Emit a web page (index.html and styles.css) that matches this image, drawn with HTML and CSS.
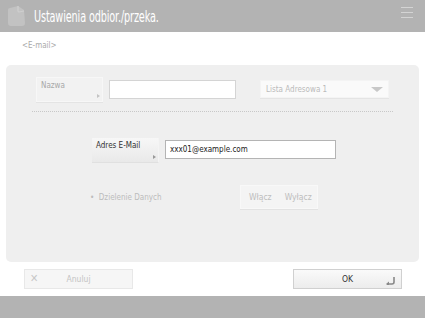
FILE: index.html
```html
<!DOCTYPE html>
<html lang="pl">
<head>
	<meta charset="UTF-8">
	<title>Ustawienia odbior./przeka.</title>
	<link rel="stylesheet" href="styles.css">
</head>
<body>
	<div class="header">
		<svg class="app-icon" width="22" height="22" viewBox="0 0 22 22">
			<path d="M3 5 Q3 3 5 3 L13 1 L19 5 L20 18 Q20 21 17 21 L6 21 Q3 21 3 18 Z" fill="#c2c2c2"/>
			<path d="M13 1 L13 6 Q13 7 14 7 L19 6" fill="none" stroke="#cfcfcf" stroke-width="1.2"/>
		</svg>
		<div class="title-wrap">
			<p class="page-name">Ustawienia odbior./przeka.</p>
		</div>
		<div class="menu-btn">
			<span></span><span></span><span></span>
		</div>
	</div>
	<div class="crumb">&lt;E-mail&gt;</div>
	<div class="panel">
		<div class="row top-row">
			<div class="key-btn disabled">Nazwa<i class="arrow"></i></div>
			<div class="text-box name-box"></div>
			<div class="select-box">Lista Adresowa 1<span class="caret"></span></div>
		</div>
		<div class="dots"></div>
		<div class="row email-row">
			<div class="key-btn">Adres E-Mail<i class="arrow"></i></div>
			<div class="text-box email-box">xxx01@example.com</div>
		</div>
		<div class="row share-row">
			<div class="share-label">&bull;&nbsp; Dzielenie Danych</div>
			<div class="toggle">
				<span>Włącz</span>
				<span>Wyłącz</span>
			</div>
		</div>
	</div>
	<div class="actions">
		<div class="act-btn cancel"><span class="x">&#x2715;</span><span class="cancel-text">Anuluj</span></div>
		<div class="act-btn ok">OK<svg class="enter" width="10" height="8" viewBox="0 0 10 8"><path d="M8 0 L8 5 Q8 7 6 7 L1 7" fill="none" stroke="#888" stroke-width="1.6"/><path d="M0 7 L3 4.5 L3 9.5 Z" fill="#888"/></svg></div>
	</div>
	<div class="footer"></div>
</body>
</html>
```

FILE: styles.css
```css
body {
	margin: 0;
	width: 425px;
	height: 318px;
	overflow: hidden;
	background: #fff;
	font-family: "DejaVu Sans", sans-serif;
	font-stretch: condensed;
	color: #333;
}

.header {
	height: 32px;
	background-color: #b3b3b3;
	display: flex;
	align-items: center;
	padding: 0 12px 0 5px;
}

.app-icon {
	margin-right: 7px;
}

.title-wrap {
	flex: 1;
}

.page-name {
	display: inline-block;
	margin: 0;
	color: #fff;
	font-size: 15px;
	letter-spacing: -0.2px;
	transform: scaleX(0.72);
	transform-origin: left center;
}

.menu-btn {
	display: flex;
	flex-direction: column;
	gap: 4px;
	margin-top: -8px;
}

.menu-btn span {
	display: block;
	width: 12px;
	height: 1px;
	background: #d4d4d4;
}

.crumb {
	margin: 9px 0 0 22px;
	height: 14px;
	font-size: 8px;
	color: #aaa;
}

.panel {
	margin: 10px 6px 0 6px;
	height: 197px;
	background-color: #efefef;
	border-radius: 5px;
	box-sizing: border-box;
	padding: 12px 30px 0 30px;
}

.row {
	display: flex;
	align-items: flex-start;
}

.key-btn {
	position: relative;
	box-sizing: border-box;
	width: 67px;
	height: 25px;
	padding: 3px 0 0 4px;
	font-size: 8px;
	color: #333;
	background: linear-gradient(#f7f7f7, #e9e9e9);
	border-bottom: 1px solid #e0e0e0;
	border-right: 1px solid #f4f4f4;
}

.key-btn.disabled {
	color: #a8a8a8;
	background: #f2f2f2;
	border: 1px solid #f7f7f7;
	box-shadow: 0 1px 0 #e4e4e4;
}

.arrow {
	position: absolute;
	right: 2px;
	bottom: 3px;
	border-left: 3px solid #999;
	border-top: 2.5px solid transparent;
	border-bottom: 2.5px solid transparent;
}

.disabled .arrow {
	border-left-color: #c4c4c4;
}

.text-box {
	box-sizing: border-box;
	height: 19px;
	background: #fff;
	border: 1px solid #c8c8c8;
	font-size: 8px;
	padding: 4px 0 0 4px;
	color: #222;
}

.name-box {
	width: 127px;
	margin: 3px 0 0 6px;
	border-color: #d4d4d4;
}

.select-box {
	box-sizing: border-box;
	position: relative;
	width: 129px;
	height: 18px;
	margin: 3px 0 0 24px;
	background: #fafafa;
	border: 1px solid #f4f4f4;
	box-shadow: 0 1px 0 #e4e4e4;
	font-size: 8px;
	color: #bbb;
	padding: 4px 0 0 5px;
}

.caret {
	position: absolute;
	right: 5px;
	top: 6px;
	border-top: 5px solid #c8c8c8;
	border-left: 6px solid transparent;
	border-right: 6px solid transparent;
}

.dots {
	margin: 9px -4px 0 -4px;
	border-top: 1px dotted #c8c8c8;
}

.email-row {
	margin: 26px 0 0 56px;
}

.email-box {
	width: 171px;
	margin: 2px 0 0 6px;
	border-color: #b4b4b4;
}

.share-row {
	margin: 22px 0 0 54px;
	align-items: center;
}

.share-label {
	width: 150px;
	font-size: 8px;
	color: #bcbcbc;
}

.toggle {
	display: flex;
	height: 22px;
	border: 1px solid #f8f8f8;
	box-shadow: 0 1px 0 #e2e2e2;
	background: #f4f4f4;
}

.toggle span {
	display: flex;
	align-items: center;
	padding: 0 5px 0 8px;
	font-size: 8.5px;
	color: #bdbdbd;
}

.actions {
	display: flex;
	justify-content: space-between;
	padding: 0 23px 0 24px;
	margin-top: 7px;
	height: 27px;
}

.act-btn {
	position: relative;
	box-sizing: border-box;
	width: 109px;
	height: 20px;
	display: flex;
	align-items: center;
	justify-content: center;
	font-size: 8.5px;
	background: linear-gradient(#fafafa, #ececec);
	border: 1px solid #dedede;
}

.cancel {
	color: #c4c4c4;
	background: #f6f6f6;
	border-color: #e8e8e8;
}

.cancel .x {
	position: absolute;
	left: 5px;
	top: 2px;
	font-size: 11px;
	color: #c8c8c8;
}

.ok {
	color: #333;
	border-color: #d0d0d0;
}

.enter {
	position: absolute;
	right: 5px;
	bottom: 3px;
}

.footer {
	height: 22px;
	background-color: #b3b3b3;
}
```
